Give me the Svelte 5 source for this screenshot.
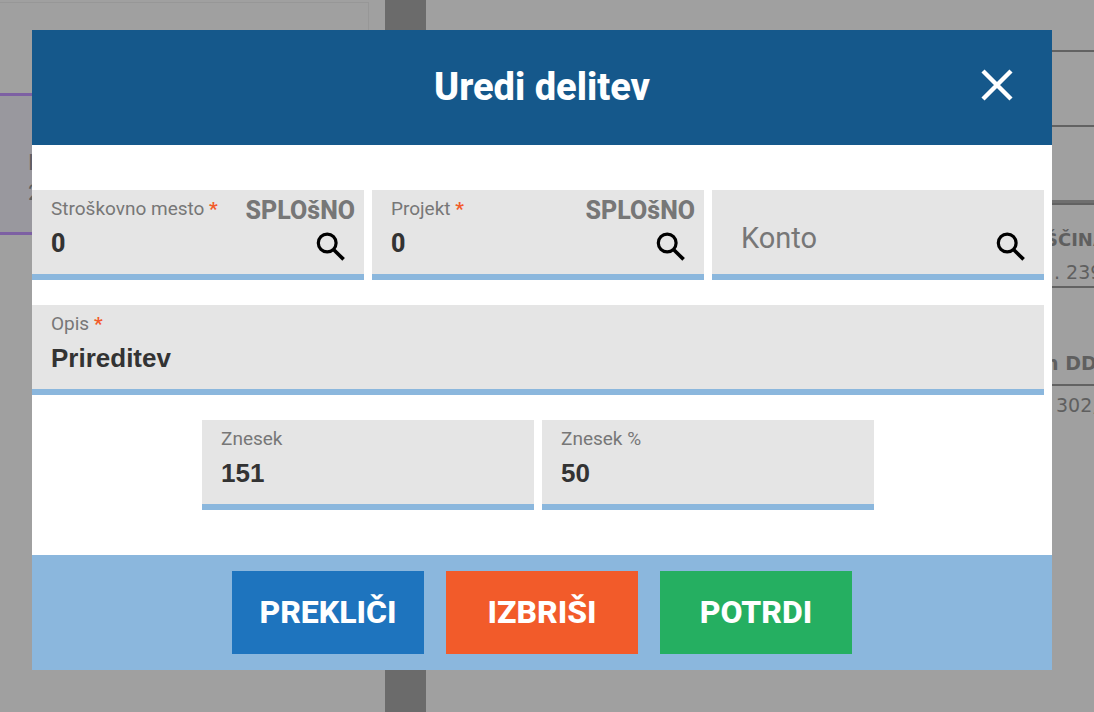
<script lang="ts">
  let costCenter = $state('0');
  let project = $state('0');
  let account = $state('');
  let description = $state('Prireditev');
  let amount = $state('151');
  let percent = $state('50');
</script>

{#snippet lens()}
  <svg viewBox="0 0 30 30" width="30" height="30" fill="none" stroke="#000" aria-hidden="true">
    <circle cx="11.2" cy="11" r="8.9" stroke-width="3.2" />
    <path d="M17.5 17.5 27.6 27.4" stroke-width="3.6" />
  </svg>
{/snippet}

<div class="screen">
  <div class="page">
    <aside class="list">
      <div class="card"></div>
      <div class="selected">
        <span>I</span>
        <span>2</span>
      </div>
    </aside>
    <div class="divider"></div>
    <section class="sheet">
      <div class="line first"></div>
      <div class="line"></div>
      <div class="line thick"></div>
      <div class="line entry"><div class="cell"><b>ŠČINA</b><span class="amount">. 239</span></div></div>
      <div class="line total"><div class="cell"><b>n DD</b></div></div>
      <div class="cell sum"><span>302,</span></div>
    </section>
  </div>

  <div class="overlay">
    <div class="dialog" role="dialog" aria-modal="true" aria-labelledby="title">
      <header>
        <h1 id="title">Uredi delitev</h1>
        <button class="close" type="button" aria-label="Zapri">
          <svg viewBox="0 0 32 32" width="32" height="32" fill="none" stroke="#fff" stroke-width="4.4" aria-hidden="true">
            <path d="M2 2 30 30M30 2 2 30" />
          </svg>
        </button>
      </header>

      <form>
        <div class="field">
          <label for="cost">Stroškovno mesto <i>*</i></label>
          <span class="hint">SPLOšNO</span>
          <input id="cost" bind:value={costCenter} />
          <button class="search" type="button" aria-label="Išči">{@render lens()}</button>
        </div>
        <div class="field">
          <label for="project">Projekt <i>*</i></label>
          <span class="hint">SPLOšNO</span>
          <input id="project" bind:value={project} />
          <button class="search" type="button" aria-label="Išči">{@render lens()}</button>
        </div>
        <div class="field">
          <input class="empty" aria-label="Konto" placeholder="Konto" bind:value={account} />
          <button class="search" type="button" aria-label="Išči">{@render lens()}</button>
        </div>
        <div class="field wide">
          <label for="description">Opis <i>*</i></label>
          <input class="plain" id="description" bind:value={description} />
        </div>
        <div class="field offset">
          <label for="amount">Znesek</label>
          <input class="plain" id="amount" bind:value={amount} />
        </div>
        <div class="field">
          <label for="percent">Znesek %</label>
          <input class="plain" id="percent" bind:value={percent} />
        </div>
      </form>

      <footer>
        <button class="cancel" type="button">PREKLIČI</button>
        <button class="delete" type="button">IZBRIŠI</button>
        <button class="confirm" type="button">POTRDI</button>
      </footer>
    </div>
  </div>
</div>

<style>
  :global(body) {
    background: #a0a0a0;
  }
  .screen {
    display: grid;
    min-height: 100vh;
    overflow: hidden;
    font-family: Roboto, sans-serif;
  }
  .page,
  .overlay {
    grid-area: 1 / 1;
    min-width: 0;
  }
  .page {
    display: grid;
    grid-template-columns: 385px 41px 1fr;
    color: #5f5f5f;
  }
  .list {
    padding-top: 2px;
  }
  .card {
    box-sizing: border-box;
    width: 369px;
    height: 91px;
    border: 1px solid #979797;
    border-width: 1px 1px 0 0;
  }
  .selected {
    box-sizing: border-box;
    height: 142px;
    padding: 52px 0 0 28px;
    display: flex;
    flex-direction: column;
    background: #99989e;
    border: 3px solid #7d60a3;
    border-width: 3px 0;
    font-size: 22px;
    line-height: 30px;
  }
  .divider {
    background: #6b6b6b;
  }
  .sheet {
    display: flex;
    flex-direction: column;
    font-family: "DejaVu Sans", sans-serif;
    font-size: 19px;
    line-height: 32px;
  }
  .line {
    box-sizing: border-box;
    height: 75px;
    border-bottom: 2px solid #626262;
  }
  .first {
    height: 52px;
  }
  .thick {
    height: 78px;
    box-shadow: inset 0 -3px #6f6f6f;
  }
  .entry {
    height: 83px;
    padding-top: 19px;
  }
  .entry b {
    font-size: 18px;
  }
  .amount {
    padding-left: 9px;
  }
  .total {
    height: 98px;
    padding-top: 59px;
  }
  .cell {
    display: flex;
    flex-direction: column;
    width: 49px;
    margin-left: auto;
    white-space: nowrap;
  }
  .sum {
    width: 38px;
    padding-top: 3px;
  }
  .overlay {
    padding: 30px 42px 42px 32px;
  }
  .dialog {
    background: #fff;
  }
  header {
    display: grid;
    grid-template-columns: 1fr auto 1fr;
    align-items: center;
    padding: 0 39px;
    background: #15588b;
    color: #fff;
  }
  h1 {
    grid-column: 2;
    margin: 0;
    font-size: 38px;
    line-height: 115px;
    font-weight: 800;
  }
  button {
    padding: 0;
    border: 0;
    background: none;
    font: inherit;
    cursor: pointer;
  }
  svg {
    display: block;
  }
  .close {
    justify-self: end;
    margin-bottom: 6px;
  }
  form {
    display: grid;
    grid-template-columns: repeat(6, 1fr);
    gap: 25px 8px;
    padding: 45px 8px 45px 0;
  }
  .field {
    grid-column: span 2;
    display: grid;
    grid-template-columns: 1fr auto;
    grid-template-rows: 30px 36px;
    padding: 6px 9px 12px 19px;
    background: #e5e5e5;
    border-bottom: 6px solid #8bb7dd;
  }
  .wide {
    grid-column: 1 / -1;
  }
  .offset {
    grid-column: 2 / span 2;
  }
  label {
    color: #777;
    font-size: 19px;
    line-height: 25px;
  }
  i {
    color: #f25b2a;
    font-style: normal;
    font-weight: 700;
  }
  .hint {
    color: #777;
    font-size: 25px;
    line-height: 30px;
    font-weight: 800;
  }
  input {
    grid-column: 1;
    grid-row: 2;
    min-width: 0;
    padding: 0 0 2px;
    border: 0;
    outline: 0;
    background: none;
    color: #333;
    font: 800 25px Roboto, sans-serif;
  }
  .plain {
    grid-column: 1 / -1;
    font-family: "Liberation Sans", sans-serif;
    font-size: 26px;
  }
  .empty {
    grid-row: 1 / 3;
    padding: 18px 0 0 10px;
    font-size: 29px;
    font-weight: 400;
  }
  .empty::placeholder {
    color: #777;
    opacity: 1;
  }
  .search {
    grid-column: 2;
    grid-row: 2;
    align-self: end;
    justify-self: end;
    margin-right: 9px;
  }
  footer {
    display: flex;
    justify-content: center;
    gap: 22px;
    padding: 16px;
    background: #8bb7dd;
  }
  footer button {
    width: 192px;
    color: #fff;
    font-size: 32px;
    line-height: 83px;
    font-weight: 800;
  }
  .cancel {
    background: #1e74be;
  }
  .delete {
    background: #f25b2a;
  }
  .confirm {
    background: #25af61;
  }
</style>
